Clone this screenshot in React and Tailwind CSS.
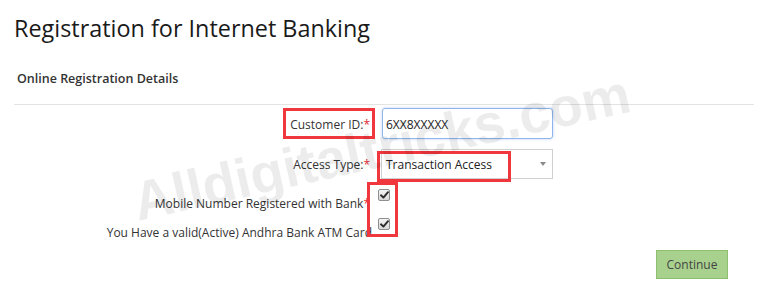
import React from "react";

function Check() {
  return (
    <div className="w-[12px] h-[12px] rounded-[2px] border border-[#8e8e8e] bg-gradient-to-b from-[#f4f4f4] to-[#d9d9d9] flex items-center justify-center">
      <svg width="9" height="8" viewBox="0 0 9 8">
        <path d="M1 4.3 L3.4 6.6 L8 1.2" fill="none" stroke="#2b2b2b" strokeWidth="1.9" strokeLinecap="round" strokeLinejoin="round" />
      </svg>
    </div>
  );
}

export default function App() {
  return (
    <div
      className="relative w-[758px] h-[294px] bg-white overflow-hidden text-[#333]"
      style={{ fontFamily: "'Open Sans', 'Noto Sans', sans-serif" }}
    >
      <div className="pl-[14px] pr-[4px]">
        <h1 className="pt-[13px] text-[23.4px] leading-[30px] text-[#1a1a1a] font-normal">
          Registration for Internet Banking
        </h1>
        <div className="mt-[27px] pl-[3px] text-[12.5px] leading-[18px] font-semibold text-[#333]">
          Online Registration Details
        </div>
        <div className="mt-[16px] border-t border-[#e3e3e3]" />

        {/* Row 1 */}
        <div className="mt-[3px] flex items-start">
          <div className="w-[356px] pt-[8px] text-right text-[12px] leading-[18px] text-[#333]">
            Customer ID:<span className="text-[#e0282e]">*</span>
          </div>
          <div className="ml-[12px] w-[171px] h-[31px] rounded-[3px] border border-[#8fb5ec] shadow-[0_0_3px_rgba(100,150,230,0.45)] flex items-center px-[3px] pt-[2px] text-[12px] leading-[18px] text-[#222]">
            6XX8XXXXX
          </div>
        </div>

        {/* Row 2 */}
        <div className="mt-[10px] flex items-start">
          <div className="w-[356px] pt-[7px] text-right text-[12px] leading-[18px] text-[#333]">
            Access Type:<span className="text-[#e0282e]">*</span>
          </div>
          <div className="ml-[11px] w-[172px] h-[30px] border border-[#d0d0d0] flex items-center justify-between pl-[4px] pr-[6px] pt-[2px] text-[12px] leading-[18px] text-[#222]">
            <span>Transaction Access</span>
            <span className="w-0 h-0 -mt-[2px] border-l-[3.5px] border-r-[3.5px] border-t-[4px] border-l-transparent border-r-transparent border-t-[#8a8a8a]" />
          </div>
        </div>

        {/* Row 3 */}
        <div className="mt-[8px] flex items-start">
          <div className="w-[356px] pt-[8px] text-right text-[12px] leading-[18px] text-[#333] whitespace-nowrap">
            Mobile Number Registered with Bank<span className="text-[#e0282e]">*</span>
          </div>
          <div className="ml-[8px] mt-[2px]">
            <Check />
          </div>
        </div>

        {/* Row 4 */}
        <div className="mt-[3px] flex items-start">
          <div className="w-[358px] pt-[8px] text-right text-[12px] leading-[18px] text-[#333] whitespace-nowrap">
            You Have a valid(Active) Andhra Bank ATM Card
          </div>
          <div className="ml-[6px] mt-[2px]">
            <Check />
          </div>
        </div>

        {/* Button */}
        <div className="mt-[8px] flex justify-end pr-[26px]">
          <button className="w-[72px] h-[29px] bg-[#a9d18e] border border-[#8dbf6e] text-[12px] leading-[18px] text-[#444]">
            Continue
          </button>
        </div>
      </div>

      {/* Annotation boxes */}
      <div className="absolute left-[283px] top-[108px] w-[92px] h-[31px] border-[3px] border-[#f0373d] pointer-events-none" />
      <div className="absolute left-[377px] top-[151px] w-[134px] h-[31px] border-[3px] border-[#f0373d] pointer-events-none" />
      <div className="absolute left-[367px] top-[182px] w-[31px] h-[55px] border-[3px] border-[#f0373d] pointer-events-none" />

      {/* Watermark */}
      <div
        className="absolute left-[128px] top-[176px] origin-top-left -rotate-[12.5deg] whitespace-nowrap text-[55px] leading-none font-bold text-[rgba(0,0,0,0.075)] pointer-events-none select-none"
        style={{ fontFamily: "'Liberation Sans', Arial, sans-serif" }}
      >
        Alldigitaltricks.com
      </div>
    </div>
  );
}
